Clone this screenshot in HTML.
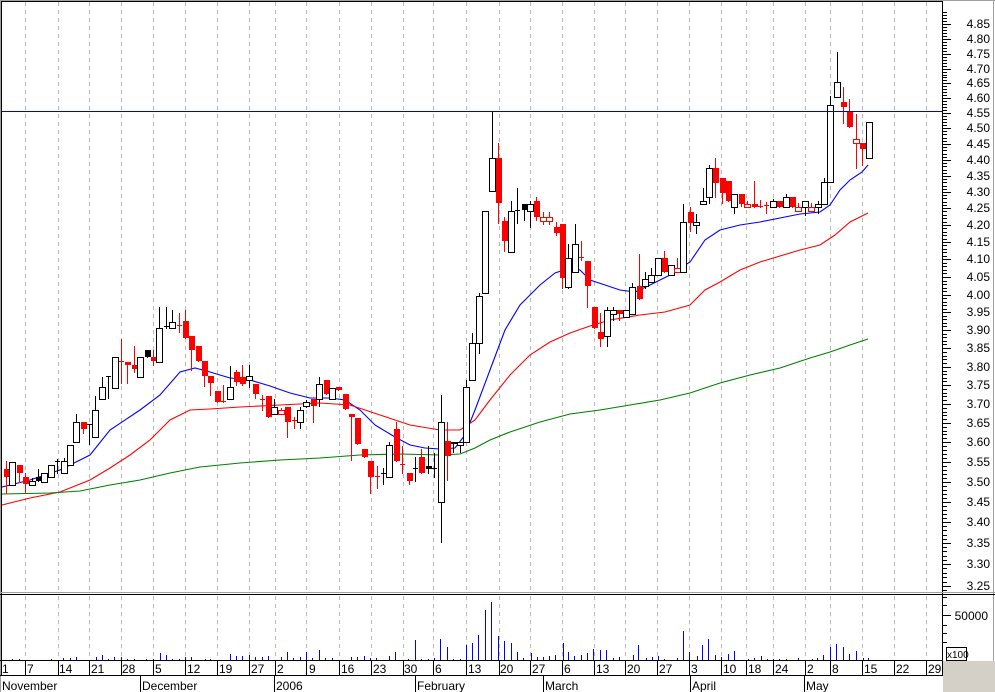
<!DOCTYPE html>
<html><head><meta charset="utf-8">
<style>
html,body{margin:0;padding:0;background:#fff;width:995px;height:692px;overflow:hidden}
svg{display:block}
text{font-family:"Liberation Sans",sans-serif;font-size:12px;fill:#000}
</style></head>
<body>
<svg id="c" width="995" height="692" viewBox="0 0 995 692" xmlns="http://www.w3.org/2000/svg" shape-rendering="crispEdges">
<rect x="0" y="0" width="995" height="692" fill="#fff"/>
<g id="grid"></g>
<g id="ma" shape-rendering="auto"></g>
<g id="cand"></g>
<g id="vol"></g>
<line x1="2" y1="111.5" x2="942" y2="111.5" stroke="#0000e0" stroke-width="1"/>
<!-- borders -->
<line x1="0.5" y1="0" x2="0.5" y2="692" stroke="#a0a0a0"/>
<line x1="1.5" y1="1" x2="1.5" y2="676" stroke="#000"/>
<line x1="0" y1="0.5" x2="995" y2="0.5" stroke="#a0a0a0"/>
<line x1="1" y1="1.5" x2="942" y2="1.5" stroke="#000"/>
<line x1="993.5" y1="0" x2="993.5" y2="661" stroke="#a0a0a0"/>
<line x1="942.5" y1="1" x2="942.5" y2="676" stroke="#000"/>
<line x1="0" y1="592.5" x2="995" y2="592.5" stroke="#a0a0a0"/>
<line x1="0" y1="594.5" x2="995" y2="594.5" stroke="#000"/>
<line x1="0" y1="660.5" x2="943" y2="660.5" stroke="#000"/>
<line x1="0" y1="675.5" x2="943" y2="675.5" stroke="#000"/>
<g id="axis"></g>
<g id="dates"></g>
<rect x="943" y="661" width="52" height="31" fill="#d4d0c8"/>
<rect x="946.5" y="647.5" width="20" height="13" fill="#fff" stroke="#000"/>
<text x="947" y="658" style="font-size:10px">x100</text>
<text x="988" y="620" text-anchor="end">50000</text>
</svg>
<script>
var NS="http://www.w3.org/2000/svg";
function el(p,t,a,txt){var e=document.createElementNS(NS,t);for(var k in a)e.setAttribute(k,a[k]);if(txt!==undefined)e.textContent=txt;document.getElementById(p).appendChild(e);return e;}
// grid
var gx=[25,58,89,121,153,185,217,249,275,306,339,371,403,433,466,499,530,562,594,625,657,689,721,746,773,805,830,862,894,926];
gx.forEach(function(x){
 el('grid','line',{x1:x+.5,y1:2,x2:x+.5,y2:592,stroke:'#b8b8b8','stroke-dasharray':'4,4'});
 el('grid','line',{x1:x+.5,y1:596,x2:x+.5,y2:660,stroke:'#b8b8b8','stroke-dasharray':'4,4'});
 el('dates','line',{x1:x+.5,y1:660,x2:x+.5,y2:676,stroke:'#000'});
});
var dl=[[2,'1'],[27,'7'],[59,'14'],[91,'21'],[122,'28'],[155,'5'],[187,'12'],[219,'19'],[251,'27'],[277,'2'],[309,'9'],[341,'16'],[373,'23'],[404,'30'],[435,'6'],[468,'13'],[500,'20'],[532,'27'],[564,'6'],[596,'13'],[627,'20'],[659,'27'],[691,'3'],[723,'10'],[748,'18'],[775,'24'],[807,'2'],[832,'8'],[864,'15'],[896,'22'],[928,'29']];
dl.forEach(function(d){el('dates','text',{x:d[0],y:673},d[1]);});
var ml=[[2,'November',0],[142,'December',140],[276,'2006',274],[417,'February',415],[545,'March',543],[692,'April',690],[806,'May',804]];
ml.forEach(function(m){el('dates','text',{x:m[0],y:690},m[1]);if(m[2])el('dates','line',{x1:m[2]+.5,y1:676,x2:m[2]+.5,y2:692,stroke:'#000'});});
// price axis
var lab=[[4.85,24],[4.80,39],[4.75,54],[4.70,69],[4.65,83],[4.60,98],[4.55,113],[4.50,128],[4.45,144],[4.40,160],[4.35,176],[4.30,192],[4.25,208],[4.20,225],[4.15,242],[4.10,259],[4.05,277],[4.00,295],[3.95,312],[3.90,330],[3.85,348],[3.80,367],[3.75,385],[3.70,404],[3.65,423],[3.60,442],[3.55,462],[3.50,482],[3.45,502],[3.40,522],[3.35,543],[3.30,564],[3.25,586]];
for(var i=0;i<lab.length;i++){
 var y=lab[i][1];
 el('axis','text',{x:990,y:y+4,'text-anchor':'end'},lab[i][0].toFixed(2));
 el('axis','line',{x1:943,y1:y+.5,x2:951,y2:y+.5,stroke:'#000'});
 var ny=(i+1<lab.length)?lab[i+1][1]:y+21;
 for(var k=1;k<5;k++){var yy=Math.round(y+(ny-y)*k/5);if(yy<592)el('axis','line',{x1:943,y1:yy+.5,x2:947,y2:yy+.5,stroke:'#000'});}
 if(i==0){for(var k=1;k<5;k++){var yy=Math.round(y-(15)*k/5);if(yy>2)el('axis','line',{x1:943,y1:yy+.5,x2:947,y2:yy+.5,stroke:'#000'});}}
}
[597,605,615,625,633,642].forEach(function(y,i){el('axis','line',{x1:943,y1:y+.5,x2:(y==615?951:947),y2:y+.5,stroke:'#000'});});
// MAs
function pl(pts,c){el('ma','polyline',{points:pts.map(function(p){return p.join(',')}).join(' '),fill:'none',stroke:c,'stroke-width':1.1});}
pl([[2,487],[30,480],[60,470],[90,455],[110,430],[140,410],[160,395],[180,372],[195,368],[210,372],[230,378],[250,380],[270,386],[290,393],[310,398],[330,398],[345,400],[360,410],[375,425],[395,437],[410,445],[425,448],[440,449],[455,448],[465,435],[475,410],[490,370],[505,330],[520,305],[540,285],[555,273],[570,268],[580,270],[590,280],[605,285],[620,290],[635,292],[650,285],[670,275],[690,262],[705,240],[720,230],[740,225],[760,222],[780,218],[800,214],[820,212],[830,205],[840,190],[850,180],[862,172],[868,165]],'#0000ff');
pl([[2,505],[30,498],[60,492],[90,480],[110,468],[130,455],[150,440],[170,420],[190,410],[210,409],[240,407],[280,405],[320,403],[350,405],[380,415],[410,425],[440,430],[460,430],[475,420],[490,400],[510,375],[530,355],[550,342],[570,333],[590,326],[610,320],[640,315],[665,312],[690,305],[705,290],[720,282],[740,270],[760,262],[780,256],[800,250],[820,245],[835,235],[850,222],[868,213]],'#ff0000');
pl([[2,494],[50,493],[80,491],[110,485],[140,480],[170,473],[200,467],[240,463],[280,460],[320,458],[360,455],[400,454],[440,455],[460,454],[475,448],[490,440],[510,432],[540,422],[570,414],[600,410],[630,405],[660,400],[690,393],[720,383],[750,375],[780,368],[810,358],[830,352],[850,345],[868,339]],'#008000');
// candles: [wickTop, wickBot, bodyTop, bodyBot, type]
var C=[
[461,493,469,477,'r'],[462,485,462,485,'w'],[465,482,465,473,'r'],[473,493,477,484,'r'],[478,485,481,485,'w'],[469,481,477,481,'b'],[473,482,473,482,'w'],[465,477,465,477,'w'],[459,473,461,461,'d'],[458,473,461,473,'w'],
[445,465,445,465,'w'],[414,442,422,442,'w'],[422,433,422,429,'r'],[424,444,424,424,'d'],[396,437,410,437,'w'],[377,399,387,399,'w'],[376,398,376,376,'d'],[357,388,357,388,'w'],[339,383,361,361,'rd'],[362,383,362,365,'r'],
[346,372,365,369,'r'],[357,377,357,377,'w'],[350,357,350,357,'b'],[350,365,357,361,'r'],[307,362,328,362,'w'],[307,328,326,326,'d'],[310,328,322,328,'w'],[313,332,325,325,'rd'],[310,338,321,338,'r'],[336,370,336,350,'r'],
[346,361,346,361,'r'],[361,386,361,376,'r'],[376,395,376,383,'r'],[391,402,391,402,'r'],[385,402,401,401,'rd'],[366,399,387,399,'w'],[370,385,372,382,'r'],[365,385,377,384,'r'],[365,387,376,380,'w'],[384,398,384,394,'r'],
[395,410,399,399,'rd'],[396,417,396,417,'r'],[399,414,407,414,'w'],[408,414,410,414,'rh'],[407,437,407,422,'r'],[417,428,420,420,'rd'],[407,428,410,422,'w'],[400,407,402,406,'w'],[399,422,399,406,'r'],[377,406,384,399,'w'],
[380,394,380,394,'r'],[388,399,388,399,'w'],[387,390,387,390,'r'],[394,409,394,409,'r'],[414,460,414,417,'r'],[418,444,418,444,'r'],[449,457,449,457,'r'],[461,493,461,477,'r'],[466,488,476,476,'rd'],[468,484,473,473,'d'],
[442,477,445,477,'w'],[422,461,429,461,'r'],[446,473,464,464,'rd'],[473,484,473,481,'r'],[457,481,468,468,'d'],[449,473,457,473,'r'],[446,473,466,469,'b'],[453,477,468,468,'d'],[395,542,422,502,'w'],[422,480,441,456,'r'],
[442,452,442,444,'b'],[442,452,442,445,'w'],[380,442,387,442,'w'],[333,380,343,380,'w'],[293,353,296,343,'w'],[211,293,211,293,'w'],[111,191,158,191,'w'],[143,223,158,203,'r'],[217,251,221,241,'r'],[201,252,211,252,'w'],
[188,223,210,210,'d'],[204,220,204,210,'b'],[201,227,204,211,'w'],[197,220,201,217,'r'],[212,224,217,221,'rh'],[212,224,217,221,'rh'],[222,235,227,233,'r'],[224,288,224,278,'r'],[244,288,258,287,'w'],[224,272,244,272,'w'],
[241,260,257,257,'rd'],[261,307,261,286,'r'],[307,328,307,328,'r'],[313,346,332,339,'r'],[307,346,310,336,'w'],[307,320,310,314,'w'],[310,320,310,314,'r'],[310,317,310,317,'w'],[283,314,287,314,'w'],[254,299,286,299,'r'],
[272,288,279,286,'w'],[268,282,275,282,'w'],[258,275,258,275,'w'],[251,272,258,272,'r'],[265,275,265,275,'w'],[258,272,268,272,'rh'],[204,272,222,272,'w'],[207,231,212,223,'r'],[214,233,222,225,'w'],[188,204,201,204,'w'],
[165,203,168,197,'w'],[158,197,168,183,'r'],[178,203,178,193,'r'],[181,201,181,201,'r'],[194,213,194,207,'w'],[194,206,194,204,'r'],[201,207,204,207,'rh'],[181,207,204,207,'r'],[200,207,206,206,'rd'],[202,213,205,205,'rd'],
[199,207,201,207,'w'],[201,207,201,207,'r'],[194,207,197,207,'w'],[197,207,197,207,'r'],[203,211,207,211,'rh'],[201,215,201,207,'w'],[203,211,207,211,'rh'],[201,213,204,207,'w'],[178,204,182,204,'w'],[96,182,105,182,'w'],
[52,97,82,97,'w'],[87,123,102,107,'r'],[99,127,112,127,'r'],[114,168,139,143,'rh'],[143,165,143,149,'r'],[122,158,122,158,'w']
];
for(var i=0;i<C.length;i++){
 var c=C[i],x=Math.round(6+6.39*i),t=c[4];
 var col=(t[0]=='r')?'#ff0000':'#000';
 el('cand','line',{x1:x+.5,y1:c[0],x2:x+.5,y2:c[1]+1,stroke:col});
 if(t=='d'||t=='rd'){el('cand','line',{x1:x-2,y1:c[2]+.5,x2:x+3,y2:c[2]+.5,stroke:col});}
 else if(t=='w'||t=='rh'){el('cand','rect',{x:x-2.5,y:c[2]+.5,width:6,height:Math.max(c[3]-c[2],2),fill:'#fff',stroke:col});}
 else{el('cand','rect',{x:x-2,y:c[2],width:6,height:Math.max(c[3]-c[2],2),fill:col});}
}
// volume
var V=[[12,659],[19,659],[51,659],[63,658],[70,658],[76,657],[96,657],[102,655],[108,659],[114,657],[121,657],[127,659],[134,659],[146,659],[153,659],[160,653],[166,655],[172,659],[179,659],[185,657],[191,657],[205,659],[210,659],[230,654],[236,656],[242,656],[249,655],[255,657],[262,657],[268,656],[281,657],[287,652],[293,658],[300,657],[306,652],[312,658],[319,650],[325,658],[332,658],[351,657],[357,657],[364,656],[370,658],[376,658],[389,656],[395,652],[408,659],[415,640],[421,659],[428,659],[434,658],[440,639],[447,647],[453,659],[460,659],[466,645],[472,643],[478,635],[485,610],[491,602],[498,636],[504,641],[511,643],[517,652],[523,658],[531,653],[537,657],[543,657],[549,656],[555,655],[563,643],[568,652],[574,656],[581,655],[587,653],[593,649],[600,650],[606,650],[613,658],[619,657],[633,655],[638,645],[646,658],[652,657],[658,656],[664,659],[677,658],[683,631],[689,652],[697,656],[702,645],[708,639],[715,655],[721,657],[728,654],[734,651],[748,659],[754,658],[761,656],[767,659],[773,659],[779,659],[786,659],[798,658],[812,659],[817,658],[823,655],[830,647],[836,644],[843,647],[849,654],[856,651],[863,658],[868,658]];
V.forEach(function(v){el('vol','line',{x1:v[0]+.5,y1:v[1],x2:v[0]+.5,y2:660,stroke:'#0000ff'});});
</script>
</body></html>
